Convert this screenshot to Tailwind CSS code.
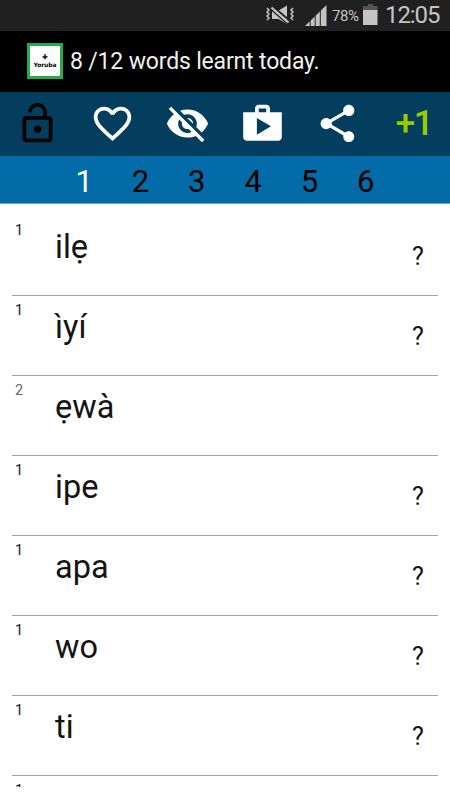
<!DOCTYPE html>
<html lang="en">
<head>
<meta charset="utf-8">
<meta name="viewport" content="width=device-width, initial-scale=1">
<title>Yoruba</title>
<script src="https://cdn.jsdelivr.net/npm/@tailwindcss/browser@4"></script>
</head>
<body class="bg-white font-[Roboto,sans-serif]">
<div class="w-[450px] h-[800px] overflow-hidden flex flex-col bg-white">
  <header class="h-[31px] shrink-0 bg-[#202020] flex items-start justify-end text-[#c4c4c4]">
    <svg class="w-[30px] h-[20px] mt-[5px] mr-[10px]" viewBox="0 0 30 20" fill="none" stroke="currentColor">
      <path d="M2 3l2 2-2 2 2 2-2 2 2 2-2 2M28 3l-2 2 2 2-2 2 2 2-2 2 2 2" stroke-width="1.500"/>
      <path d="M7 5.500h6.500l8.500-5V19l-8.500-5H7z" fill="currentColor" stroke="none"/>
      <path d="M8 1.500L25 16" stroke="#202020" stroke-width="2"/>
      <path d="M6 4.500L22 18.500" stroke="#202020" stroke-width="1.500"/>
      <path d="M6.500 2.500L23.500 17.500" stroke-width="2.200"/>
    </svg>
    <svg class="w-[22px] h-[22px] mt-[5px] mr-[5px]" viewBox="0 0 22 22" fill="currentColor">
      <path d="M0 21L21.500 0V21z"/>
      <path d="M5.200 0V22M10.200 0V22M15.300 0V22" stroke="#202020" stroke-width="1"/>
    </svg>
    <span class="w-[27px] text-[15px] leading-[20px] mt-[6px] tracking-[-0.4px] whitespace-nowrap">78%</span>
    <svg class="w-[15px] h-[21px] mt-[4px] ml-[4px]" viewBox="0 0 15 21" fill="currentColor">
      <path d="M5 0h5v2h4.500v4H0V2h5z" fill="#555"/><path d="M0 6h14.500v15H0z"/>
    </svg>
    <span class="w-[56px] ml-[7px] mr-[9px] text-[24px] leading-[28px] mt-[1px] tracking-[-1.1px] whitespace-nowrap">12:05</span>
  </header>
  <section class="h-[61px] shrink-0 bg-black flex items-center pl-[27px]">
    <div class="w-[36px] h-[36px] mb-[1px] border-[3px] border-[#22ac4b] bg-white flex flex-col items-center font-['DejaVu_Sans',sans-serif] font-bold text-[6px] text-black">
      <span class="text-[7px] leading-[7px] mt-[8px] [-webkit-text-stroke:0.5px_black]">+</span>
      <span class="leading-[7px] tracking-[-0.1px]">Yoruba</span>
    </div>
    <p class="ml-[7px] pt-[1px] text-[23px] leading-[30px] tracking-[-0.17px] text-[#f0f0f0] whitespace-nowrap">8 /12 words learnt today.</p>
  </section>
  <nav class="h-[64px] pb-[1px] shrink-0 bg-[#033e5f] grid grid-cols-6 items-center justify-items-center text-white">
    <svg class="size-[45px] text-black" viewBox="0 0 24 24" fill="currentColor"><path d="M12 17c1.100 0 2-.9 2-2s-.9-2-2-2-2 .9-2 2 .9 2 2 2zm6-9h-1V6c0-2.760-2.240-5-5-5S7 3.240 7 6h1.900c0-1.710 1.390-3.100 3.100-3.100 1.710 0 3.100 1.390 3.100 3.100v2H6c-1.100 0-2 .9-2 2v10c0 1.100.9 2 2 2h12c1.100 0 2-.9 2-2V10c0-1.100-.9-2-2-2zm0 12H6V10h12v10z"/></svg>
    <svg class="size-[45px]" viewBox="0 0 24 24" fill="currentColor"><path d="M16.500 3c-1.740 0-3.410.81-4.500 2.090C10.910 3.810 9.240 3 7.500 3 4.420 3 2 5.420 2 8.500c0 3.780 3.400 6.860 8.550 11.540L12 21.350l1.450-1.320C18.600 15.360 22 12.280 22 8.500 22 5.420 19.580 3 16.500 3zm-4.400 15.550l-.1.100-.1-.1C7.140 14.240 4 11.390 4 8.500 4 6.500 5.500 5 7.500 5c1.540 0 3.040.99 3.570 2.360h1.870C13.460 5.990 14.960 5 16.500 5c2 0 3.500 1.500 3.500 3.500 0 2.890-3.140 5.740-7.900 10.050z"/></svg>
    <svg class="size-[45px]" viewBox="0 0 24 24" fill="currentColor"><path d="M12 7c2.760 0 5 2.240 5 5 0 .65-.13 1.260-.36 1.830l2.920 2.920c1.510-1.260 2.700-2.890 3.430-4.750-1.730-4.390-6-7.500-11-7.500-1.400 0-2.740.25-3.980.7l2.160 2.160C10.740 7.130 11.350 7 12 7zM2 4.270l2.280 2.280.46.46C3.080 8.300 1.780 10.020 1 12c1.730 4.390 6 7.500 11 7.500 1.550 0 3.030-.3 4.380-.84l.42.42L19.730 22 21 20.730 3.270 3 2 4.270zM7.530 9.800l1.550 1.550c-.05.21-.08.43-.08.65 0 1.660 1.340 3 3 3 .22 0 .44-.03.65-.08l1.550 1.550c-.67.33-1.410.53-2.200.53-2.760 0-5-2.240-5-5 0-.79.2-1.530.53-2.200zm4.310-.78l3.150 3.150.02-.16c0-1.660-1.340-3-3-3l-.17.01z"/></svg>
    <svg class="size-[45px]" viewBox="0 0 24 24" fill="currentColor"><path d="M16 6V4c0-1.110-.89-2-2-2h-4c-1.110 0-2 .89-2 2v2H1.700v13.200c0 1.110.89 2 2 2h16.600c1.110 0 2-.89 2-2V6h-6.300zm-6-2h4v2h-4V4zM9 18V9l7.500 4.500L9 18z"/></svg>
    <svg class="size-[45px]" viewBox="0 0 24 24" fill="currentColor"><path d="M18 16.080c-.76 0-1.440.3-1.960.77L8.910 12.700c.05-.23.09-.46.09-.7s-.04-.47-.09-.7l7.050-4.110c.54.5 1.250.81 2.040.81 1.660 0 3-1.340 3-3s-1.340-3-3-3-3 1.340-3 3c0 .24.040.47.090.7L8.040 9.810C7.500 9.310 6.790 9 6 9c-1.660 0-3 1.340-3 3s1.340 3 3 3c.79 0 1.500-.31 2.040-.81l7.120 4.160c-.05.21-.08.43-.08.65 0 1.610 1.310 2.920 2.920 2.920 1.610 0 2.920-1.310 2.920-2.920s-1.310-2.920-2.920-2.920z"/></svg>
    <span class="text-[35px] leading-[40px] pt-[1px] pl-[3px] font-medium text-[#99cc00] tracking-[-1.5px] whitespace-nowrap">+1</span>
  </nav>
  <div class="h-[48px] shrink-0 bg-[#036ba7] border-b border-[#6ba7cb] pl-[56px] pr-[56px] grid grid-cols-6 text-center text-[31px] leading-[51px] text-black">
    <span class="text-white">1</span><span>2</span><span>3</span><span>4</span><span>5</span><span>6</span>
  </div>
  <main id="words" class="mt-[12px] ml-[12px] w-[426px] h-[571px] shrink-0 overflow-hidden"></main>
</div>
<script>
const words = [['1','ilẹ',1],['1','ìyí',1],['2','ẹwà',0],['1','ipe',1],['1','apa',1],['1','wo',1],['1','ti',1],['1','',0]];
document.getElementById('words').innerHTML = words.map(([n, w, q]) => `
  <div class="h-[80px] w-[426px] border-b border-[#a3a3a3] flex items-start whitespace-nowrap text-[#141414]">
    <span class="w-[43px] pl-[3px] pt-[6px] text-[14.5px] leading-[18px] ${n === '2' ? 'text-[#666666]' : ''}">${n}</span>
    <span class="grow pt-[11px] text-[32.5px] leading-[40px]">${w}</span>
    <span class="w-[26px] pt-[26px] text-[25px] leading-[30px]">${q ? '?' : ''}</span>
  </div>`).join('');
</script>
</body>
</html>
